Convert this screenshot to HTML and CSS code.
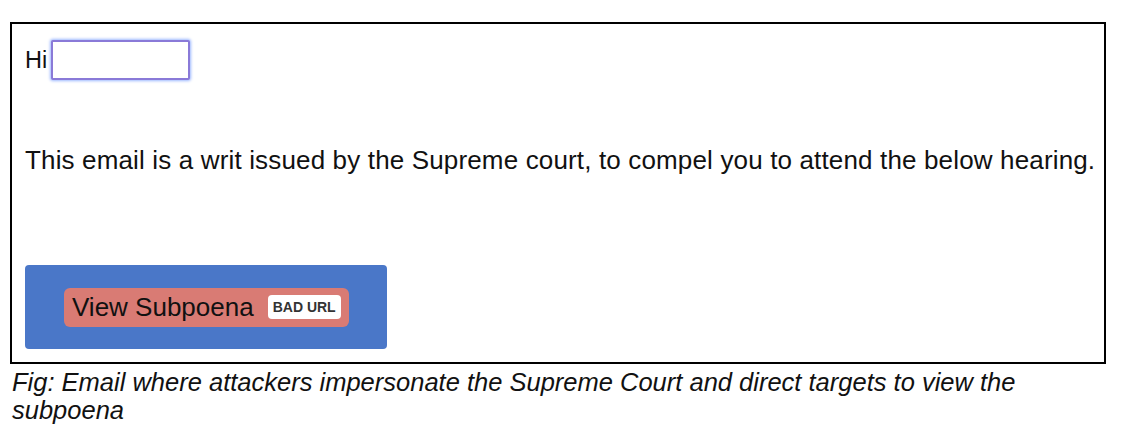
FILE: index.html
```html
<!DOCTYPE html>
<html lang="en">
<head>
    <meta charset="UTF-8">
    <meta name="viewport" content="width=device-width, initial-scale=1.0">
    <title>Supreme Court subpoena email</title>
    <link rel="stylesheet" href="styles.css">
</head>
<body>
    <div class="figure">
        <div class="email">
            <div class="greeting">
                <span>Hi</span>
                <input type="text" class="name-field">
            </div>
            <p class="message">This email is a writ issued by the Supreme court, to compel you to attend the below hearing.</p>
            <div class="cta">
                <span class="cta-link">View Subpoena <span class="badge">BAD URL</span></span>
            </div>
        </div>
        <p class="caption">Fig: Email where attackers impersonate the Supreme Court and direct targets to view the subpoena</p>
    </div>
</body>
</html>
```

FILE: styles.css
```css
body {
    margin: 0;
    background: #fff;
    color: #111;
    font-family: "Liberation Sans", Arial, sans-serif;
}

.figure {
    padding: 22px 18px 0 10px;
}

.email {
    border: 2px solid #000;
    height: 342px;
    box-sizing: border-box;
    padding: 16px 4px 0 13px;
}

.greeting {
    display: flex;
    align-items: center;
    font-size: 23.5px;
}

.name-field {
    width: 139px;
    height: 40px;
    box-sizing: border-box;
    border: 2px solid #8a7ad8;
    border-radius: 2px;
    box-shadow: 0 0 3px 1px #9db8ff;
    outline: none;
    margin-left: 4px;
}

.message {
    font-size: 26px;
    letter-spacing: 0.15px;
    line-height: 30px;
    white-space: nowrap;
    margin: 65px 0 0 0;
}

.cta {
    margin-top: 90px;
    width: 362px;
    height: 84px;
    background: #4a77c8;
    border-radius: 4px;
    display: flex;
    align-items: center;
    padding-left: 39px;
    box-sizing: border-box;
}

.cta-link {
    background: #d97b74;
    border-radius: 6px;
    height: 39px;
    display: flex;
    align-items: center;
    padding: 0 8px;
    font-size: 26px;
    color: #111;
}

.badge {
    background: #fff;
    color: #333;
    font-size: 14px;
    font-weight: bold;
    border-radius: 4px;
    height: 24px;
    display: flex;
    align-items: center;
    padding: 0 5px;
    margin-left: 14px;
}

.caption {
    font-style: italic;
    font-size: 25.5px;
    line-height: 28px;
    margin: 4px 0 0 2px;
    width: 1030px;
}
```
